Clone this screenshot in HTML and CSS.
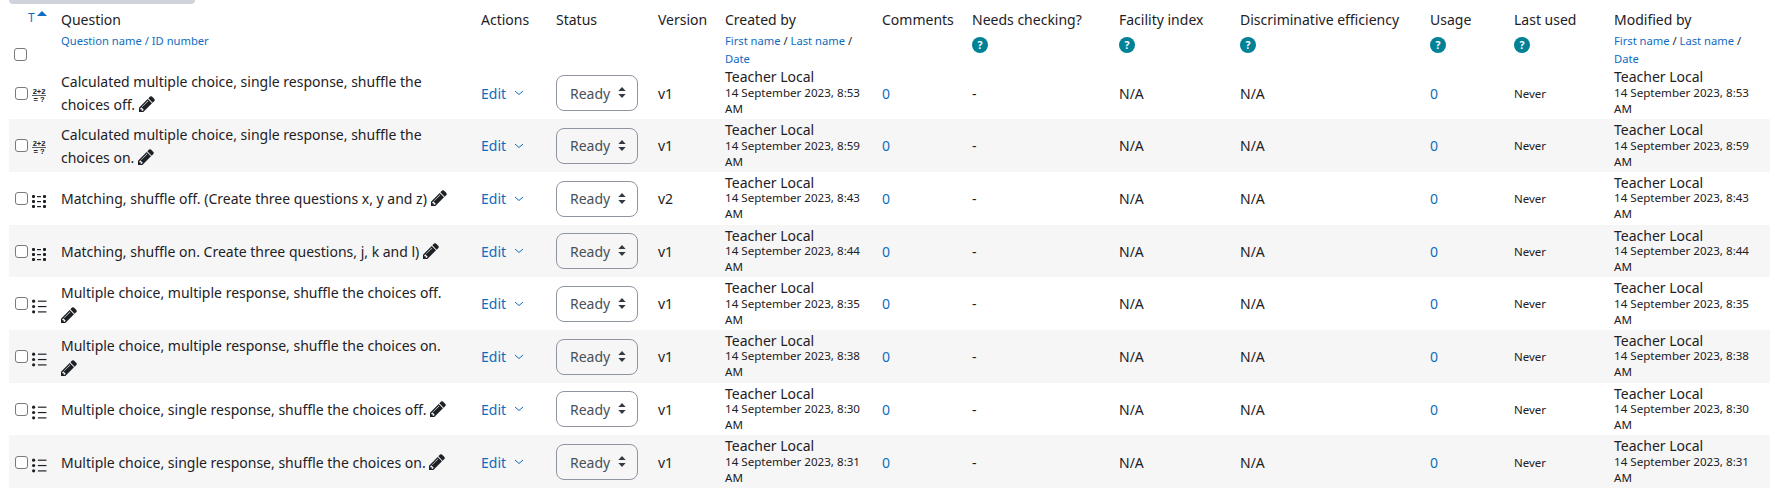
FILE: index.html
```html
<!DOCTYPE html>
<html lang="en">
<head>
<meta charset="utf-8">
<title>Question bank</title>
<link rel="stylesheet" href="styles.css">
</head>
<body>
<svg class="defs" width="0" height="0" aria-hidden="true">
  <defs>
    <symbol id="pencil" viewBox="128 128 1536 1536">
      <path d="M491 1536l91-91-235-235-91 91v107h128v128h107zm523-928q0-22-22-22-10 0-17 7l-542 542q-7 7-7 17 0 22 22 22 10 0 17-7l542-542q7-7 7-17zm-54-192l416 416-832 832h-416v-416zm683 96q0 53-37 90l-166 166-416-416 166-165q36-38 90-38 53 0 91 38l235 234q37 39 37 91z" fill="#1d2125"/>
    </symbol>
    <symbol id="match" viewBox="0 0 15 13">
      <g fill="#1d2125">
        <rect x="0" y="0" width="3" height="3" rx="1"/><rect x="5" y="1" width="4" height="1.200"/><rect x="11" y="0" width="3" height="3" rx="1"/>
        <rect x="0" y="5" width="3" height="3" rx="1"/><rect x="5" y="6" width="4" height="1.200"/><rect x="11" y="5" width="3" height="3" rx="1"/>
        <rect x="0" y="10" width="3" height="3" rx="1"/><rect x="5" y="11" width="4" height="1.200"/><rect x="11" y="10" width="3" height="3" rx="1"/>
      </g>
    </symbol>
    <symbol id="multi" viewBox="0 0 14 13">
      <g fill="#1d2125">
        <circle cx="1.500" cy="1.500" r="1.500"/><rect x="5.500" y="1" width="8" height="1.100"/>
        <circle cx="1.500" cy="6.500" r="1.500"/><rect x="5.500" y="6" width="8" height="1.100"/>
        <circle cx="1.500" cy="11.500" r="1.500"/><rect x="5.500" y="11" width="8" height="1.100"/>
      </g>
    </symbol>
    <symbol id="calc" viewBox="0 0 15 15">
      <text x="7" y="5" text-anchor="middle" class="calc-text">2+2</text>
      <rect x="0" y="6" width="14" height="1" fill="#5a5f64"/>
      <text x="7" y="13" text-anchor="middle" class="calc-text">= ?</text>
    </symbol>
    <symbol id="help" viewBox="0 0 16 16">
      <circle cx="8" cy="8" r="8" fill="#008196"/>
      <text x="8" y="11.700" text-anchor="middle" class="help-text">?</text>
    </symbol>
    <symbol id="chev" viewBox="0 0 10 6">
      <path d="M1 1l4 3.500L9 1" fill="none" stroke="#0f6cbf" stroke-width="1"/>
    </symbol>
    <symbol id="carets" viewBox="0 0 8 11">
      <path d="M4 0l3.700 4H.3zM4 11L.3 7h7.400z" fill="#343a40"/>
    </symbol>
    <symbol id="sortup" viewBox="0 0 10 5">
      <path d="M5 0l5 5H0z" fill="#0f6cbf"/>
    </symbol>
  </defs>
</svg>
<div class="topbar"></div>
<table class="qbank">
  <colgroup>
    <col class="c-check"><col class="c-type"><col class="c-question"><col class="c-actions"><col class="c-status"><col class="c-version"><col class="c-created"><col class="c-comments"><col class="c-needs"><col class="c-facility"><col class="c-disc"><col class="c-usage"><col class="c-last"><col class="c-modified">
  </colgroup>
  <thead>
    <tr>
      <th class="th-check"><input type="checkbox" aria-label="Select all"></th>
      <th class="th-type"><a class="sort" href="#">T</a><svg class="sort-icon"><use href="#sortup"/></svg></th>
      <th>Question<div class="sub"><a href="#">Question name / ID number</a></div></th>
      <th>Actions</th>
      <th>Status</th>
      <th>Version</th>
      <th>Created by<div class="sub"><a href="#">First name</a> / <a href="#">Last name</a> / <a href="#">Date</a></div></th>
      <th>Comments</th>
      <th>Needs checking?<div class="hlp"><svg class="help"><use href="#help"/></svg></div></th>
      <th>Facility index<div class="hlp"><svg class="help"><use href="#help"/></svg></div></th>
      <th>Discriminative efficiency<div class="hlp"><svg class="help"><use href="#help"/></svg></div></th>
      <th>Usage<div class="hlp"><svg class="help"><use href="#help"/></svg></div></th>
      <th>Last used<div class="hlp"><svg class="help"><use href="#help"/></svg></div></th>
      <th>Modified by<div class="sub"><a href="#">First name</a> / <a href="#">Last name</a> / <a href="#">Date</a></div></th>
    </tr>
  </thead>
  <tbody>
    <tr>
      <td class="td-check"><input type="checkbox" aria-label="Select"></td>
      <td class="td-type"><svg class="qi"><use href="#calc"/></svg></td>
      <td class="q">Calculated multiple choice, single response, shuffle the choices off. <svg class="pencil"><use href="#pencil"/></svg></td>
      <td><a class="edit" href="#">Edit<svg class="chev"><use href="#chev"/></svg></a></td>
      <td><div class="sel"><select aria-label="Status"><option>Ready</option></select><svg class="carets"><use href="#carets"/></svg></div></td>
      <td>v1</td>
      <td class="by">Teacher Local<div class="date">14 September 2023, 8:53 AM</div></td>
      <td><a href="#">0</a></td><td>-</td><td>N/A</td><td>N/A</td><td><a href="#">0</a></td><td class="never">Never</td>
      <td class="by">Teacher Local<div class="date">14 September 2023, 8:53 AM</div></td>
    </tr>
    <tr>
      <td class="td-check"><input type="checkbox" aria-label="Select"></td>
      <td class="td-type"><svg class="qi"><use href="#calc"/></svg></td>
      <td class="q">Calculated multiple choice, single response, shuffle the choices on. <svg class="pencil"><use href="#pencil"/></svg></td>
      <td><a class="edit" href="#">Edit<svg class="chev"><use href="#chev"/></svg></a></td>
      <td><div class="sel"><select aria-label="Status"><option>Ready</option></select><svg class="carets"><use href="#carets"/></svg></div></td>
      <td>v1</td>
      <td class="by">Teacher Local<div class="date">14 September 2023, 8:59 AM</div></td>
      <td><a href="#">0</a></td><td>-</td><td>N/A</td><td>N/A</td><td><a href="#">0</a></td><td class="never">Never</td>
      <td class="by">Teacher Local<div class="date">14 September 2023, 8:59 AM</div></td>
    </tr>
    <tr>
      <td class="td-check"><input type="checkbox" aria-label="Select"></td>
      <td class="td-type"><svg class="qi"><use href="#match"/></svg></td>
      <td class="q">Matching, shuffle off. (Create three questions x, y and z) <svg class="pencil"><use href="#pencil"/></svg></td>
      <td><a class="edit" href="#">Edit<svg class="chev"><use href="#chev"/></svg></a></td>
      <td><div class="sel"><select aria-label="Status"><option>Ready</option></select><svg class="carets"><use href="#carets"/></svg></div></td>
      <td>v2</td>
      <td class="by">Teacher Local<div class="date">14 September 2023, 8:43 AM</div></td>
      <td><a href="#">0</a></td><td>-</td><td>N/A</td><td>N/A</td><td><a href="#">0</a></td><td class="never">Never</td>
      <td class="by">Teacher Local<div class="date">14 September 2023, 8:43 AM</div></td>
    </tr>
    <tr>
      <td class="td-check"><input type="checkbox" aria-label="Select"></td>
      <td class="td-type"><svg class="qi"><use href="#match"/></svg></td>
      <td class="q">Matching, shuffle on. Create three questions, j, k and l) <svg class="pencil"><use href="#pencil"/></svg></td>
      <td><a class="edit" href="#">Edit<svg class="chev"><use href="#chev"/></svg></a></td>
      <td><div class="sel"><select aria-label="Status"><option>Ready</option></select><svg class="carets"><use href="#carets"/></svg></div></td>
      <td>v1</td>
      <td class="by">Teacher Local<div class="date">14 September 2023, 8:44 AM</div></td>
      <td><a href="#">0</a></td><td>-</td><td>N/A</td><td>N/A</td><td><a href="#">0</a></td><td class="never">Never</td>
      <td class="by">Teacher Local<div class="date">14 September 2023, 8:44 AM</div></td>
    </tr>
    <tr>
      <td class="td-check"><input type="checkbox" aria-label="Select"></td>
      <td class="td-type"><svg class="qi"><use href="#multi"/></svg></td>
      <td class="q">Multiple choice, multiple response, shuffle the choices off. <svg class="pencil"><use href="#pencil"/></svg></td>
      <td><a class="edit" href="#">Edit<svg class="chev"><use href="#chev"/></svg></a></td>
      <td><div class="sel"><select aria-label="Status"><option>Ready</option></select><svg class="carets"><use href="#carets"/></svg></div></td>
      <td>v1</td>
      <td class="by">Teacher Local<div class="date">14 September 2023, 8:35 AM</div></td>
      <td><a href="#">0</a></td><td>-</td><td>N/A</td><td>N/A</td><td><a href="#">0</a></td><td class="never">Never</td>
      <td class="by">Teacher Local<div class="date">14 September 2023, 8:35 AM</div></td>
    </tr>
    <tr>
      <td class="td-check"><input type="checkbox" aria-label="Select"></td>
      <td class="td-type"><svg class="qi"><use href="#multi"/></svg></td>
      <td class="q">Multiple choice, multiple response, shuffle the choices on. <svg class="pencil"><use href="#pencil"/></svg></td>
      <td><a class="edit" href="#">Edit<svg class="chev"><use href="#chev"/></svg></a></td>
      <td><div class="sel"><select aria-label="Status"><option>Ready</option></select><svg class="carets"><use href="#carets"/></svg></div></td>
      <td>v1</td>
      <td class="by">Teacher Local<div class="date">14 September 2023, 8:38 AM</div></td>
      <td><a href="#">0</a></td><td>-</td><td>N/A</td><td>N/A</td><td><a href="#">0</a></td><td class="never">Never</td>
      <td class="by">Teacher Local<div class="date">14 September 2023, 8:38 AM</div></td>
    </tr>
    <tr>
      <td class="td-check"><input type="checkbox" aria-label="Select"></td>
      <td class="td-type"><svg class="qi"><use href="#multi"/></svg></td>
      <td class="q">Multiple choice, single response, shuffle the choices off. <svg class="pencil"><use href="#pencil"/></svg></td>
      <td><a class="edit" href="#">Edit<svg class="chev"><use href="#chev"/></svg></a></td>
      <td><div class="sel"><select aria-label="Status"><option>Ready</option></select><svg class="carets"><use href="#carets"/></svg></div></td>
      <td>v1</td>
      <td class="by">Teacher Local<div class="date">14 September 2023, 8:30 AM</div></td>
      <td><a href="#">0</a></td><td>-</td><td>N/A</td><td>N/A</td><td><a href="#">0</a></td><td class="never">Never</td>
      <td class="by">Teacher Local<div class="date">14 September 2023, 8:30 AM</div></td>
    </tr>
    <tr>
      <td class="td-check"><input type="checkbox" aria-label="Select"></td>
      <td class="td-type"><svg class="qi"><use href="#multi"/></svg></td>
      <td class="q">Multiple choice, single response, shuffle the choices on. <svg class="pencil"><use href="#pencil"/></svg></td>
      <td><a class="edit" href="#">Edit<svg class="chev"><use href="#chev"/></svg></a></td>
      <td><div class="sel"><select aria-label="Status"><option>Ready</option></select><svg class="carets"><use href="#carets"/></svg></div></td>
      <td>v1</td>
      <td class="by">Teacher Local<div class="date">14 September 2023, 8:31 AM</div></td>
      <td><a href="#">0</a></td><td>-</td><td>N/A</td><td>N/A</td><td><a href="#">0</a></td><td class="never">Never</td>
      <td class="by">Teacher Local<div class="date">14 September 2023, 8:31 AM</div></td>
    </tr>
  </tbody>
</table>
</body>
</html>
```
FILE: styles.css
```css
html, body {
  margin: 0;
  padding: 0;
  background: #fff;
}
body {
  padding: 0 5px 0 9px;
  overflow: hidden;
  font-family: "Noto Sans", "Open Sans", sans-serif;
  font-size: 14px;
  color: #1d2125;
}
a {
  color: #0f6cbf;
  text-decoration: none;
}
.defs {
  display: block;
  height: 0;
}
.calc-text {
  font: 700 7.500px "Liberation Sans", sans-serif;
  fill: #1d2125;
  text-rendering: geometricPrecision;
}
.help-text {
  font: 700 10.500px "Noto Sans", sans-serif;
  fill: #fff;
}
.topbar {
  width: 186px;
  height: 4px;
  background: #ced4da;
  border-radius: 0 0 8px 8px;
}
.qbank {
  width: 1761px;
  table-layout: fixed;
  border-collapse: collapse;
}
.c-check { width: 19px; }
.c-type { width: 29px; }
.c-question { width: 420px; }
.c-actions { width: 75px; }
.c-status { width: 102px; }
.c-version { width: 67px; }
.c-created { width: 157px; }
.c-comments { width: 90px; }
.c-needs { width: 147px; }
.c-facility { width: 121px; }
.c-disc { width: 190px; }
.c-usage { width: 84px; }
.c-last { width: 100px; }
.c-modified { width: 160px; }
th {
  padding: 4px 4px 0;
  vertical-align: top;
  text-align: left;
  font-weight: 400;
  line-height: 23px;
}
.sub {
  margin: 1px 0 -1.600px;
  font-size: 11.200px;
  line-height: 18px;
}
.hlp {
  height: 27px;
  display: flex;
  align-items: center;
}
.help {
  display: block;
  width: 16px;
  height: 16px;
}
.th-check {
  padding: 44px 0 0 5px;
  line-height: 0;
}
.th-type {
  padding: 1px 0 0;
}
.sort {
  font-size: 12px;
}
.sort-icon {
  width: 10px;
  height: 5px;
  margin-left: 2px;
  vertical-align: 6px;
}
input[type="checkbox"] {
  appearance: none;
  margin: 0;
  width: 13px;
  height: 13px;
  display: block;
  background: #fff;
  border: 1.300px solid #7a7a7a;
  border-radius: 3px;
}
td {
  padding: 3px 4px 2.300px;
  vertical-align: middle;
}
tbody tr:nth-child(even) td {
  background: #f6f6f6;
}
.td-check {
  padding-left: 6px;
  padding-right: 0;
}
.td-type {
  padding-left: 4px;
  padding-right: 0;
}
.qi {
  display: block;
  width: 15px;
  height: 15px;
  margin-top: 6px;
}
.q {
  padding-right: 17px;
  line-height: 23px;
}
.pencil {
  width: 16px;
  height: 16px;
  vertical-align: -2px;
}
.edit {
  display: inline-flex;
  align-items: center;
}
.chev {
  width: 10px;
  height: 6px;
  margin-left: 8px;
}
.sel {
  position: relative;
  width: 82px;
  height: 36px;
}
.sel select {
  appearance: none;
  width: 100%;
  height: 100%;
  padding: 0 0 0 13px;
  border: 1px solid #8f959e;
  border-radius: 8px;
  background: transparent;
  color: #495057;
  font: inherit;
}
.carets {
  position: absolute;
  right: 12px;
  top: 12px;
  width: 8px;
  height: 11px;
}
.by {
  line-height: 15.400px;
}
.date {
  font-size: 11.600px;
  line-height: 16px;
}
.never {
  font-size: 11.500px;
}
```
